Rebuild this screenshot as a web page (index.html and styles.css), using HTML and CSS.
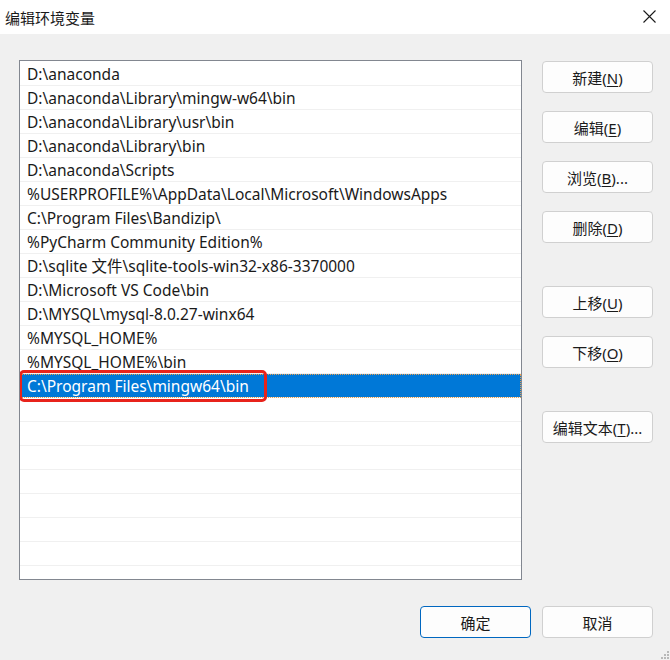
FILE: index.html
```html
<!DOCTYPE html>
<html lang="zh-CN">
<head>
    <meta charset="UTF-8">
    <title>编辑环境变量</title>
    <link rel="stylesheet" href="styles.css">
</head>
<body>
    <div class="dialog">
        <div class="title-bar">
            <span class="title">编辑环境变量</span>
            <span class="close-btn">
                <svg width="13" height="13" viewBox="0 0 13 13"><path d="M0.5 0.5L12.5 12.5M12.5 0.5L0.5 12.5" stroke="#1a1a1a" stroke-width="1.1" fill="none"/></svg>
            </span>
        </div>

        <div class="dialog-body">
            <div class="main-row">
                <div class="path-list">
                    <div class="path-row">D:\anaconda</div>
                    <div class="path-row">D:\anaconda\Library\mingw-w64\bin</div>
                    <div class="path-row">D:\anaconda\Library\usr\bin</div>
                    <div class="path-row">D:\anaconda\Library\bin</div>
                    <div class="path-row">D:\anaconda\Scripts</div>
                    <div class="path-row">%USERPROFILE%\AppData\Local\Microsoft\WindowsApps</div>
                    <div class="path-row">C:\Program Files\Bandizip\</div>
                    <div class="path-row">%PyCharm Community Edition%</div>
                    <div class="path-row">D:\sqlite 文件\sqlite-tools-win32-x86-3370000</div>
                    <div class="path-row">D:\Microsoft VS Code\bin</div>
                    <div class="path-row">D:\MYSQL\mysql-8.0.27-winx64</div>
                    <div class="path-row">%MYSQL_HOME%</div>
                    <div class="path-row">%MYSQL_HOME%\bin</div>
                    <div class="path-row selected">
                        <span class="selected-text">C:\Program Files\mingw64\bin</span>
                        <span class="highlight-box"></span>
                    </div>
                    <div class="path-row"></div>
                    <div class="path-row"></div>
                    <div class="path-row"></div>
                    <div class="path-row"></div>
                    <div class="path-row"></div>
                    <div class="path-row"></div>
                    <div class="path-row"></div>
                    <div class="path-row"></div>
                </div>

                <div class="side-buttons">
                    <button class="btn">新建(<u>N</u>)</button>
                    <button class="btn">编辑(<u>E</u>)</button>
                    <button class="btn">浏览(<u>B</u>)...</button>
                    <button class="btn">删除(<u>D</u>)</button>
                    <button class="btn gap-large">上移(<u>U</u>)</button>
                    <button class="btn">下移(<u>O</u>)</button>
                    <button class="btn gap-large">编辑文本(<u>T</u>)...</button>
                </div>
            </div>

            <div class="footer">
                <button class="btn default">确定</button>
                <button class="btn">取消</button>
            </div>
        </div>

        <!-- resize grip -->
        <div class="grip">
            <span></span><span></span><span></span>
        </div>
    </div>
</body>
</html>
```

FILE: styles.css
```css
* {
    margin: 0;
    padding: 0;
    box-sizing: border-box;
}

body {
    font-family: 'Noto Sans', 'Noto Sans CJK SC', sans-serif;
    font-size: 14px;
    color: #1a1a1a;
    background-color: #f0f0f0;
}

.dialog {
    width: 670px;
    height: 660px;
    position: relative;
    background-color: #f0f0f0;
    overflow: hidden;
}

.title-bar {
    height: 34px;
    background-color: #ffffff;
    display: flex;
    align-items: center;
    justify-content: space-between;
    padding-left: 5px;
    padding-right: 14px;
}

.title {
    font-size: 15px;
    font-family: 'Noto Sans CJK SC', sans-serif;
}

.close-btn {
    display: flex;
    align-items: center;
    margin-top: -2px;
}

.dialog-body {
    padding: 26px 17px 0 19px;
}

.main-row {
    display: flex;
    align-items: flex-start;
}

.path-list {
    width: 504px;
    height: 520px;
    background-color: #ffffff;
    border: 1px solid #828790;
    padding-top: 0;
    overflow: hidden;
}

.path-row {
    height: 24px;
    border-bottom: 1px solid #f0f0f0;
    padding-left: 7px;
    padding-top: 1px;
    line-height: 23px;
    font-size: 15.5px;
    white-space: nowrap;
    position: relative;
}

.path-row:first-child {
    height: 25px;
    padding-top: 2px;
}

.path-row.selected {
    background-color: #0078d7;
    color: #ffffff;
    outline: 1px dotted #e8a050;
    outline-offset: -1px;
}

.highlight-box {
    position: absolute;
    left: -1px;
    top: -4px;
    width: 248px;
    height: 32px;
    border: 3px solid #e8231b;
    border-radius: 5px;
}

.side-buttons {
    display: flex;
    flex-direction: column;
    gap: 18px;
    margin-left: 20px;
    margin-top: 1px;
}

.btn {
    width: 111px;
    height: 32px;
    background-color: #fdfdfd;
    border: 1px solid #d0d0d0;
    border-radius: 4px;
    font-family: 'Noto Sans', 'Noto Sans CJK SC', sans-serif;
    font-size: 15px;
    color: #1a1a1a;
}

.btn u {
    text-underline-offset: 2px;
}

.btn.gap-large {
    margin-top: 25px;
}

.btn.default {
    border-color: #0067c0;
}

.footer {
    display: flex;
    justify-content: flex-end;
    gap: 11px;
    margin-top: 26px;
}

.grip {
    position: absolute;
    right: 1px;
    bottom: 1px;
    width: 10px;
    height: 10px;
}

.grip span {
    position: absolute;
    width: 2px;
    height: 2px;
    background-color: #b8b8b8;
}

.grip span:nth-child(1) { right: 0; bottom: 0; box-shadow: -3px 0 #b8b8b8, -6px 0 #b8b8b8; }
.grip span:nth-child(2) { right: 0; bottom: 3px; box-shadow: -3px 0 #b8b8b8; }
.grip span:nth-child(3) { right: 0; bottom: 6px; }
```
